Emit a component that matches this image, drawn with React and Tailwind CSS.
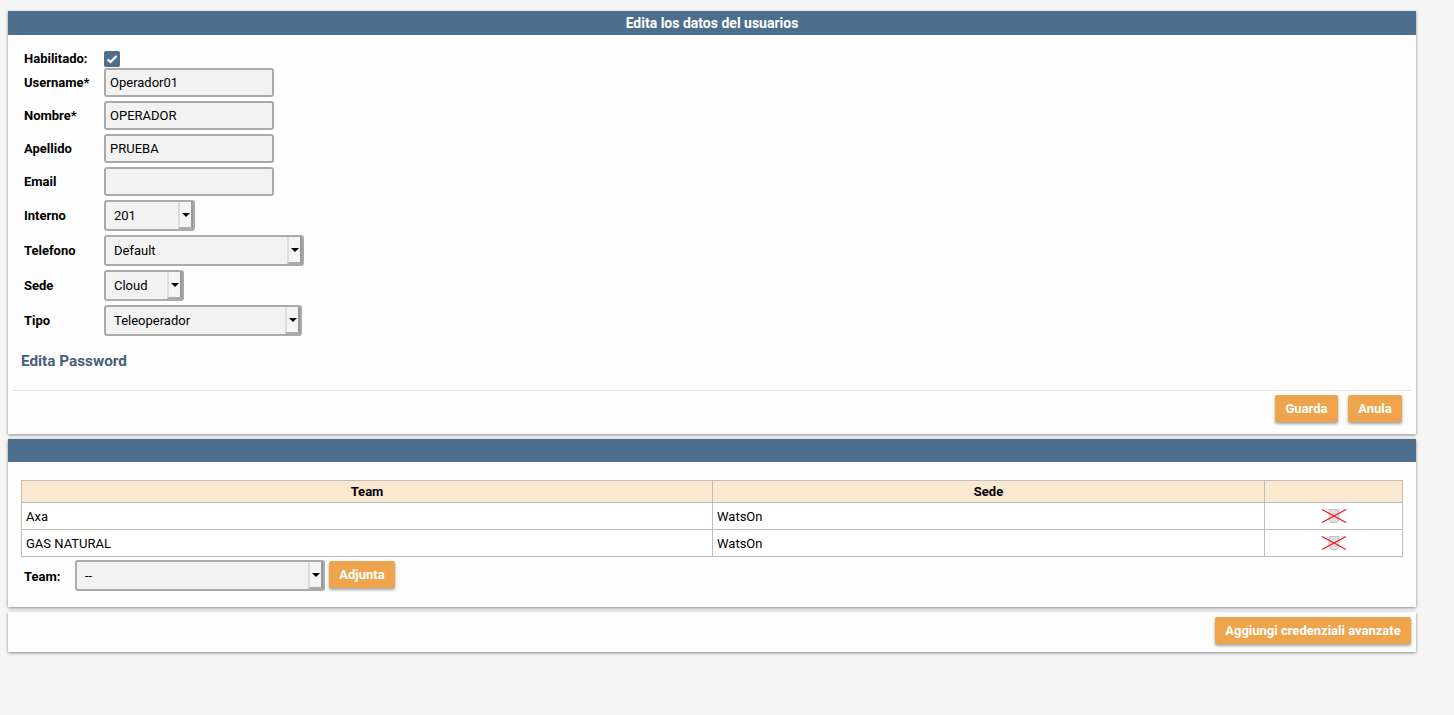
function CheckIcon() {
  return (
    <svg viewBox="0 0 16 16" fill="none" className="h-4 w-4" stroke="#fff" strokeWidth="2.2" aria-hidden="true">
      <path d="M3.5 8.5 6.5 11l6-6" />
    </svg>
  );
}

function DeleteIcon() {
  return (
    <svg viewBox="0 0 26 16" fill="none" className="h-4 w-[26px]" aria-hidden="true">
      <path d="M8 1.5h10v10.5l-2 2.5H10L8 12z" fill="#dedede" stroke="#c4c4c4" />
      <path d="M1 1.5 25 14.5M1 14.5 25 1.5" stroke="#f5101c" strokeWidth="1.2" />
    </svg>
  );
}

function Field({ label, children, className = "" }) {
  return (
    <div className={`flex items-center ${className}`}>
      <label className="w-24 pl-4 font-bold text-black">{label}</label>
      {children}
    </div>
  );
}

function TextInput({ value }) {
  return (
    <input
      readOnly
      value={value}
      className="h-[29px] w-[170px] rounded-[3px] border-2 border-[#aaaaaa] bg-[#f2f2f2] px-1 text-[13px] text-black outline-none"
    />
  );
}

function SelectBox({ value, className }) {
  return (
    <div className={`flex h-[31px] items-stretch rounded-[3px] border-2 border-[#aaaaaa] bg-[#f2f2f2] ${className}`}>
      <span className="flex-1 self-center pl-2 text-[13px] text-black">{value}</span>
      <span className="flex w-[15px] items-center justify-center border-r-2 border-b-2 border-l-2 border-r-[#999999] border-b-[#aaaaaa] border-l-[#dddddd] bg-[#f4f4f4]">
        <span className="h-0 w-0 border-x-[4px] border-t-[4px] border-x-transparent border-t-black" />
      </span>
    </div>
  );
}

function OrangeButton({ children, className = "" }) {
  return (
    <button className={`h-[27px] rounded-[2px] bg-[#eda44d] text-[13px] font-bold text-white shadow-[0_2px_3px_rgba(0,0,0,0.35)] ${className}`}>
      {children}
    </button>
  );
}

function Panel({ children, className = "" }) {
  return <section className={`w-[1408px] bg-[#fdfdfd] shadow-[0_1px_3px_rgba(0,0,0,0.45)] ${className}`}>{children}</section>;
}

const teams = ["Axa", "GAS NATURAL"];

export default function App() {
  return (
    <div className="min-h-[715px] bg-[#f5f5f5] pt-[11px] pl-2 font-['Roboto',sans-serif] text-[13px]">
      <Panel>
        <div className="flex h-6 items-center justify-center bg-[#4d6f8d] pb-px text-sm font-bold text-white">
          Edita los datos del usuarios
        </div>
        <div className="pt-4">
          <Field label="Habilitado:" className="h-4">
            <span className="flex h-4 w-4 items-center justify-center rounded-[2px] bg-[#4d6f8d]">
              <CheckIcon />
            </span>
          </Field>
          <div className="mt-px flex flex-col gap-1">
            <Field label="Username*"><TextInput value="Operador01" /></Field>
            <Field label="Nombre*"><TextInput value="OPERADOR" /></Field>
            <Field label="Apellido"><TextInput value="PRUEBA" /></Field>
            <Field label="Email"><TextInput value="" /></Field>
          </div>
          <div className="mt-1 flex flex-col gap-1">
            <Field label="Interno"><SelectBox value="201" className="w-[91px]" /></Field>
            <Field label="Telefono"><SelectBox value="Default" className="w-[200px]" /></Field>
            <Field label="Sede"><SelectBox value="Cloud" className="w-[80px]" /></Field>
            <Field label="Tipo"><SelectBox value="Teleoperador" className="w-[198px]" /></Field>
          </div>
          <h3 className="mt-[17px] pl-[13px] text-[15.3px] leading-[16px] font-bold text-[#46607a]">Edita Password</h3>
          <div className="mx-[5px] mt-[21px] h-px bg-[#e2e2e2]" />
          <div className="flex justify-end gap-2.5 pt-1 pr-[14px] pb-3">
            <OrangeButton className="w-[63px]">Guarda</OrangeButton>
            <OrangeButton className="w-[54px]">Anula</OrangeButton>
          </div>
        </div>
      </Panel>

      <Panel className="mt-[5px]">
        <div className="h-[23px] bg-[#4d6f8d]" />
        <div className="px-[13px] pt-[18px] pb-4">
          <table className="w-[1382px] table-fixed border-collapse text-black">
            <thead>
              <tr className="h-[22px] bg-[#fae8d1]">
                <th className="w-[691px] border border-[#bdbdbd] font-bold">Team</th>
                <th className="w-[552px] border border-[#bdbdbd] font-bold">Sede</th>
                <th className="border border-[#bdbdbd]" />
              </tr>
            </thead>
            <tbody>
              {teams.map((team) => (
                <tr key={team} className="h-[27px] bg-white">
                  <td className="border border-[#bdbdbd] pt-px pl-1">{team}</td>
                  <td className="border border-[#bdbdbd] pt-px pl-1">WatsOn</td>
                  <td className="border border-[#bdbdbd]">
                    <div className="flex justify-center">
                      <DeleteIcon />
                    </div>
                  </td>
                </tr>
              ))}
            </tbody>
          </table>
          <div className="mt-[3px] flex items-start">
            <label className="mt-[7px] w-[54px] pl-[3px] font-bold text-black">Team:</label>
            <SelectBox value="--" className="w-[250px]" />
            <OrangeButton className="mt-px ml-1 w-[66px]">Adjunta</OrangeButton>
          </div>
        </div>
      </Panel>

      <Panel className="mt-[5px] flex h-10 items-start justify-end pt-[5px] pr-[5px]">
        <OrangeButton className="w-[196px]">Aggiungi credenziali avanzate</OrangeButton>
      </Panel>
    </div>
  );
}
